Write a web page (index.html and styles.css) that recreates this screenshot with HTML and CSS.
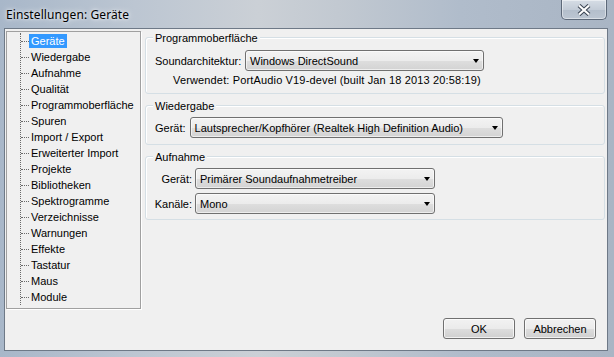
FILE: index.html
```html
<!DOCTYPE html>
<html lang="de">
<head>
  <meta charset="UTF-8">
  <title>Einstellungen: Geräte</title>
  <link rel="stylesheet" href="styles.css">
</head>
<body>

<div class="window">
  <div class="titlebar">
    <span class="title">Einstellungen: Geräte</span>
    <button class="close-btn" title="Schließen">
      <svg width="16" height="12" viewBox="0 0 16 12">
        <path d="M3 1.5 L13 10.5 M13 1.5 L3 10.5" stroke="#3c4654" stroke-width="4.2" fill="none"/>
        <path d="M3 1.5 L13 10.5 M13 1.5 L3 10.5" stroke="#ffffff" stroke-width="2.2" fill="none"/>
      </svg>
    </button>
  </div>

  <div class="client">
    <div class="main">
      <div class="tree">
        <div class="tree-lines">
          <ul class="tree-list">
            <li class="selected"><span class="branch"></span><span class="item">Geräte</span></li>
            <li><span class="branch"></span><span class="item">Wiedergabe</span></li>
            <li><span class="branch"></span><span class="item">Aufnahme</span></li>
            <li><span class="branch"></span><span class="item">Qualität</span></li>
            <li><span class="branch"></span><span class="item">Programmoberfläche</span></li>
            <li><span class="branch"></span><span class="item">Spuren</span></li>
            <li><span class="branch"></span><span class="item">Import / Export</span></li>
            <li><span class="branch"></span><span class="item">Erweiterter Import</span></li>
            <li><span class="branch"></span><span class="item">Projekte</span></li>
            <li><span class="branch"></span><span class="item">Bibliotheken</span></li>
            <li><span class="branch"></span><span class="item">Spektrogramme</span></li>
            <li><span class="branch"></span><span class="item">Verzeichnisse</span></li>
            <li><span class="branch"></span><span class="item">Warnungen</span></li>
            <li><span class="branch"></span><span class="item">Effekte</span></li>
            <li><span class="branch"></span><span class="item">Tastatur</span></li>
            <li><span class="branch"></span><span class="item">Maus</span></li>
            <li><span class="branch"></span><span class="item">Module</span></li>
          </ul>
        </div>
      </div>

      <div class="page">
        <div class="group">
          <div class="group-title">Programmoberfläche</div>
          <div class="row">
            <span class="field-label host-label">Soundarchitektur:</span>
            <div class="combo host-combo"><span>Windows DirectSound</span><span class="arrow"></span></div>
          </div>
          <div class="info">Verwendet: PortAudio V19-devel (built Jan 18 2013 20:58:19)</div>
        </div>

        <div class="group">
          <div class="group-title">Wiedergabe</div>
          <div class="row">
            <span class="field-label">Gerät:</span>
            <div class="combo play-combo"><span>Lautsprecher/Kopfhörer (Realtek High Definition Audio)</span><span class="arrow"></span></div>
          </div>
        </div>

        <div class="group">
          <div class="group-title">Aufnahme</div>
          <div class="form-grid">
            <span class="field-label">Gerät:</span>
            <div class="combo rec-combo"><span>Primärer Soundaufnahmetreiber</span><span class="arrow"></span></div>
            <span class="field-label">Kanäle:</span>
            <div class="combo rec-combo"><span>Mono</span><span class="arrow"></span></div>
          </div>
        </div>
      </div>
    </div>

    <div class="buttons">
      <button class="btn">OK</button>
      <button class="btn">Abbrechen</button>
    </div>
  </div>
</div>

</body>
</html>
```

FILE: styles.css
```css
* {
  box-sizing: border-box;
}

body {
  margin: 0;
  width: 614px;
  height: 357px;
  overflow: hidden;
  font-family: "Liberation Sans", Arial, sans-serif;
  font-size: 11px;
  color: #000;
  background: linear-gradient(to right, #a8b7c9 0%, #bcc6d2 22%, #cbd0d6 42%, #c2c9d1 55%, #b0bccb 75%, #a9b5c4 100%);
}

.window {
  display: flex;
  flex-direction: column;
  height: 357px;
}

/* title bar */

.titlebar {
  height: 28px;
  display: flex;
  justify-content: space-between;
  align-items: flex-start;
}

.title {
  margin: 6px 0 0 6px;
  font-family: "Noto Sans", "Open Sans", sans-serif;
  font-size: 12px;
  line-height: 17px;
  letter-spacing: 0.1px;
  color: #000;
  text-shadow: 0 0 6px rgba(255, 255, 255, 0.9), 0 0 3px rgba(255, 255, 255, 0.8);
}

.close-btn {
  width: 46px;
  height: 20px;
  margin-right: 7px;
  padding: 0;
  border: 1px solid #5d6979;
  border-top: none;
  border-radius: 0 0 5px 5px;
  background: linear-gradient(#d6dde5, #c3ccd7 50%, #b3becb 51%, #bcc6d2);
  box-shadow: inset 0 0 0 1px rgba(255, 255, 255, 0.45);
  display: flex;
  align-items: center;
  justify-content: center;
}

/* client area */

.client {
  flex: 1;
  margin: 0 6px 6px 4px;
  border: 1px solid #6e7987;
  background: #f0f0f0;
  display: flex;
  flex-direction: column;
}

.main {
  display: flex;
  margin: 2px 0 0 1px;
}

/* tree */

.tree {
  width: 135px;
  height: 278px;
  border: 1px solid #a0a0a0;
  box-shadow: 1px 1px 0 #fff;
  background: #f0f0f0;
  padding-top: 1px;
}

.tree-lines {
  margin: 8px 0 8px 13px;
  border-left: 1px dotted #6a6a6a;
}

.tree-list {
  list-style: none;
  margin: -8px 0;
  padding: 0;
}

.tree-list li {
  height: 16px;
  display: flex;
  align-items: center;
}

.branch {
  width: 8px;
  border-top: 1px dotted #6a6a6a;
}

.item {
  line-height: 14px;
  padding: 0 2px;
  white-space: nowrap;
}

.selected .item {
  background: #3399ff;
  color: #fff;
}

/* preference page */

.page {
  margin-left: 4px;
  width: 460px;
  display: flex;
  flex-direction: column;
}

.group {
  margin-top: 6px;
  border: 1px solid #d5dfe5;
  border-radius: 3px;
  box-shadow: inset 1px 1px 0 #fff;
  padding: 0 0 6px 9px;
  display: flex;
  flex-direction: column;
  align-items: flex-start;
}

.group + .group {
  margin-top: 11px;
}

.group-title {
  margin: -6px 0 0 -2px;
  padding: 0 2px;
  line-height: 13px;
  background: #f0f0f0;
}

.row {
  display: flex;
  align-items: center;
  gap: 4px;
  margin-top: 5px;
}

.group + .group .row,
.form-grid {
  margin-top: 4px;
}

.field-label {
  white-space: nowrap;
}

.host-label {
  width: 86px;
}

.info {
  margin: 3px 0 0 18px;
  line-height: 13px;
  letter-spacing: 0.15px;
}

.form-grid {
  display: grid;
  grid-template-columns: 37px 240px;
  column-gap: 3px;
  row-gap: 4px;
  align-items: center;
}

.form-grid .field-label {
  justify-self: end;
}

.group:last-child {
  padding-bottom: 5px;
}

/* combo boxes */

.combo {
  height: 21px;
  border: 1px solid #707070;
  border-radius: 3px;
  background: linear-gradient(#f3f3f3, #ececec 50%, #dedede 51%, #d3d3d3);
  box-shadow: inset 0 0 0 1px rgba(255, 255, 255, 0.6);
  display: flex;
  align-items: center;
  padding: 0 4px 0 4px;
  white-space: nowrap;
}

.arrow {
  margin-left: auto;
  margin-right: 0;
  width: 0;
  height: 0;
  border-left: 3.5px solid transparent;
  border-right: 3.5px solid transparent;
  border-top: 4px solid #000;
}

.host-combo {
  width: 239px;
}

.play-combo {
  width: 313px;
}

.rec-combo {
  width: 240px;
}

/* dialog buttons */

.buttons {
  margin: auto 11px 11px 0;
  display: flex;
  justify-content: flex-end;
  gap: 9px;
}

.btn {
  width: 72px;
  height: 21px;
  padding: 0;
  font-family: "Liberation Sans", Arial, sans-serif;
  font-size: 11px;
  color: #000;
  border: 1px solid #707070;
  border-radius: 3px;
  background: linear-gradient(#f2f2f2, #ebebeb 50%, #dddddd 51%, #cfcfcf);
  box-shadow: inset 0 0 0 1px rgba(255, 255, 255, 0.7);
}
```
